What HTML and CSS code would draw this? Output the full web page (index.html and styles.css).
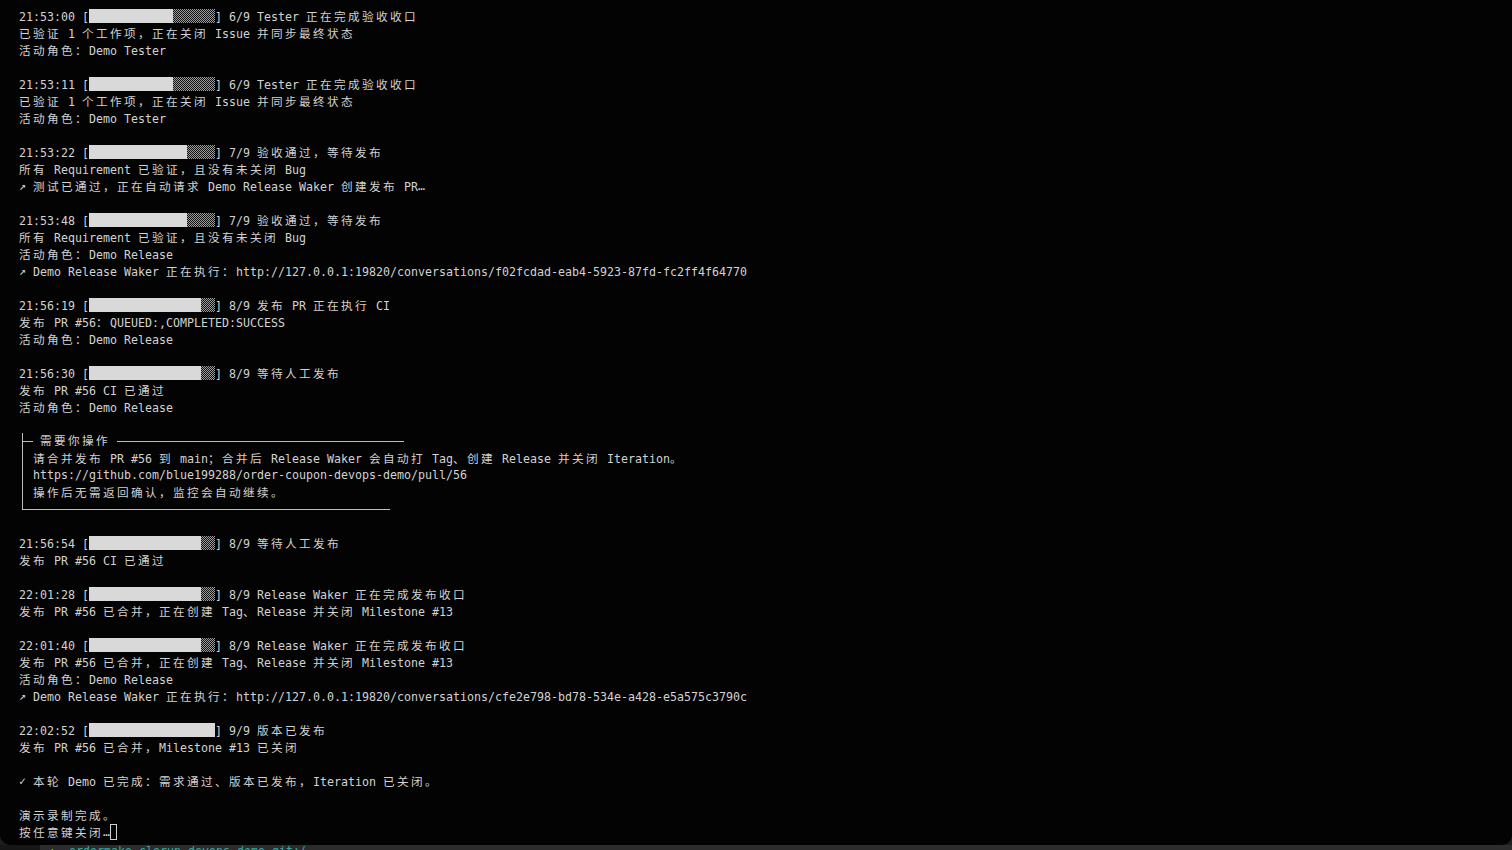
FILE: index.html
```html
<!DOCTYPE html>
<html lang="zh-CN">
<head>
<meta charset="utf-8">
<title>Terminal</title>
<link rel="stylesheet" href="styles.css">
</head>
<body>
<div class="term">
  <div class="l">21:53:00 [<span class="bar"><span class="f" style="width:84px"></span><span class="e" style="width:42px"></span></span>] 6/9 Tester <span class="w">正在完成验收收口</span></div>
  <div class="l"><span class="w">已验证</span> 1 <span class="w">个工作项，正在关闭</span> Issue <span class="w">并同步最终状态</span></div>
  <div class="l"><span class="w">活动角色：</span>Demo Tester</div>
  <div class="l"></div>
  <div class="l">21:53:11 [<span class="bar"><span class="f" style="width:84px"></span><span class="e" style="width:42px"></span></span>] 6/9 Tester <span class="w">正在完成验收收口</span></div>
  <div class="l"><span class="w">已验证</span> 1 <span class="w">个工作项，正在关闭</span> Issue <span class="w">并同步最终状态</span></div>
  <div class="l"><span class="w">活动角色：</span>Demo Tester</div>
  <div class="l"></div>
  <div class="l">21:53:22 [<span class="bar"><span class="f" style="width:98px"></span><span class="e" style="width:28px"></span></span>] 7/9 <span class="w">验收通过，等待发布</span></div>
  <div class="l"><span class="w">所有</span> Requirement <span class="w">已验证，且没有未关闭</span> Bug</div>
  <div class="l"><span class="c">↗</span> <span class="w">测试已通过，正在自动请求</span> Demo Release Waker <span class="w">创建发布</span> PR<span class="c">…</span></div>
  <div class="l"></div>
  <div class="l">21:53:48 [<span class="bar"><span class="f" style="width:98px"></span><span class="e" style="width:28px"></span></span>] 7/9 <span class="w">验收通过，等待发布</span></div>
  <div class="l"><span class="w">所有</span> Requirement <span class="w">已验证，且没有未关闭</span> Bug</div>
  <div class="l"><span class="w">活动角色：</span>Demo Release</div>
  <div class="l"><span class="c">↗</span> Demo Release Waker <span class="w">正在执行：</span>http://127.0.0.1:19820/conversations/f02fcdad-eab4-5923-87fd-fc2ff4f64770</div>
  <div class="l"></div>
  <div class="l">21:56:19 [<span class="bar"><span class="f" style="width:112px"></span><span class="e" style="width:14px"></span></span>] 8/9 <span class="w">发布</span> PR <span class="w">正在执行</span> CI</div>
  <div class="l"><span class="w">发布</span> PR #56<span class="w">：</span>QUEUED:,COMPLETED:SUCCESS</div>
  <div class="l"><span class="w">活动角色：</span>Demo Release</div>
  <div class="l"></div>
  <div class="l">21:56:30 [<span class="bar"><span class="f" style="width:112px"></span><span class="e" style="width:14px"></span></span>] 8/9 <span class="w">等待人工发布</span></div>
  <div class="l"><span class="w">发布</span> PR #56 CI <span class="w">已通过</span></div>
  <div class="l"><span class="w">活动角色：</span>Demo Release</div>
  <div class="l"></div>

  <div class="box">
    <div class="box-head"><span class="seg s1"></span><span class="title"><span class="w">需要你操作</span></span><span class="seg s2"></span></div>
    <div class="box-body">
      <div class="l"><span class="w">请合并发布</span> PR #56 <span class="w">到</span> main<span class="w">；合并后</span> Release Waker <span class="w">会自动打</span> Tag<span class="w">、创建</span> Release <span class="w">并关闭</span> Iteration<span class="w">。</span></div>
      <div class="l">https://github.com/blue199288/order-coupon-devops-demo/pull/56</div>
      <div class="l"><span class="w">操作后无需返回确认，监控会自动继续。</span></div>
    </div>
  </div>

  <div class="l">21:56:54 [<span class="bar"><span class="f" style="width:112px"></span><span class="e" style="width:14px"></span></span>] 8/9 <span class="w">等待人工发布</span></div>
  <div class="l"><span class="w">发布</span> PR #56 CI <span class="w">已通过</span></div>
  <div class="l"></div>
  <div class="l">22:01:28 [<span class="bar"><span class="f" style="width:112px"></span><span class="e" style="width:14px"></span></span>] 8/9 Release Waker <span class="w">正在完成发布收口</span></div>
  <div class="l"><span class="w">发布</span> PR #56 <span class="w">已合并，正在创建</span> Tag<span class="w">、</span>Release <span class="w">并关闭</span> Milestone #13</div>
  <div class="l"></div>
  <div class="l">22:01:40 [<span class="bar"><span class="f" style="width:112px"></span><span class="e" style="width:14px"></span></span>] 8/9 Release Waker <span class="w">正在完成发布收口</span></div>
  <div class="l"><span class="w">发布</span> PR #56 <span class="w">已合并，正在创建</span> Tag<span class="w">、</span>Release <span class="w">并关闭</span> Milestone #13</div>
  <div class="l"><span class="w">活动角色：</span>Demo Release</div>
  <div class="l"><span class="c">↗</span> Demo Release Waker <span class="w">正在执行：</span>http://127.0.0.1:19820/conversations/cfe2e798-bd78-534e-a428-e5a575c3790c</div>
  <div class="l"></div>
  <div class="l">22:02:52 [<span class="bar"><span class="f" style="width:126px"></span></span>] 9/9 <span class="w">版本已发布</span></div>
  <div class="l"><span class="w">发布</span> PR #56 <span class="w">已合并，</span>Milestone #13 <span class="w">已关闭</span></div>
  <div class="l"></div>
  <div class="l"><span class="c">✓</span> <span class="w">本轮</span> Demo <span class="w">已完成：需求通过、版本已发布，</span>Iteration <span class="w">已关闭。</span></div>
  <div class="l"></div>
  <div class="l"><span class="w">演示录制完成。</span></div>
  <div class="l"><span class="w">按任意键关闭</span><span class="c">…</span><span class="cursor"></span></div>
</div>
<div class="below">
  <div class="below-left"></div>
  <div class="below-right"><span class="prompt"><span class="arrow">➜</span>  ordermako-clerun-devops-demo git:(</span></div>
</div>
</body>
</html>
```

FILE: styles.css
```css
html, body {
  margin: 0;
  padding: 0;
}

body {
  background: #1e1e1e;
  width: 1512px;
  height: 850px;
  overflow: hidden;
}

.term {
  box-sizing: border-box;
  height: 845px;
  background: #030303;
  border-radius: 0 0 10px 10px;
  padding: 7.5px 0 0 19px;
  overflow: hidden;
  color: #d2d2d2;
  font-family: "DejaVu Sans Mono", "Noto Sans CJK SC", monospace;
  font-size: 11.63px;
  line-height: 17px;
}

.l {
  height: 17px;
  white-space: pre;
}

.w {
  font-family: "Noto Sans CJK SC", "DejaVu Sans Mono", sans-serif;
  letter-spacing: 2.37px;
}

.c {
  display: inline-block;
  width: 7px;
  text-align: center;
  overflow: visible;
  vertical-align: top;
}

.bar {
  display: inline-block;
  vertical-align: top;
  height: 14px;
  margin-top: 1.5px;
  font-size: 0;
  white-space: nowrap;
}

.bar .f,
.bar .e {
  display: inline-block;
  height: 14px;
  vertical-align: top;
}

.bar .f {
  background: #d9d9d9;
}

.bar .e {
  background-color: #000;
  background-image: repeating-conic-gradient(#9c9c9c 0 25%, #111 0 50%);
  background-size: 2px 2px;
}

.cursor {
  display: inline-block;
  box-sizing: border-box;
  width: 7px;
  height: 16px;
  margin-top: 0.5px;
  vertical-align: top;
  border: 1px solid #cfcfcf;
}

/* boxed notice */
.box {
  box-sizing: border-box;
  width: 368px;
  margin: 8.5px 0 25px 3px;
  border-left: 1px solid #bdbdbd;
  border-bottom: 1px solid #bdbdbd;
  padding: 0 0 8px 10px;
}

.box-head {
  display: flex;
  align-items: center;
  height: 17px;
  margin: -8.5px -14px 0 -10px;
  white-space: pre;
}

.seg {
  height: 1px;
  background: #bdbdbd;
}

.s1 {
  width: 10px;
}

.s2 {
  flex: 1;
}

.title {
  padding: 0 7px;
}

/* strip below the window */
.below {
  display: flex;
  height: 5px;
  overflow: hidden;
}

.below-left {
  width: 40px;
  background: #161616;
}

.below-right {
  flex: 1;
  background: #2c2c2c;
  font-family: "DejaVu Sans Mono", monospace;
  font-size: 11.63px;
  line-height: 17px;
  white-space: pre;
}

.prompt {
  display: block;
  margin-top: -2px;
  padding-left: 8px;
  color: #35a89c;
}

.arrow {
  color: #9fd3a0;
}
```
